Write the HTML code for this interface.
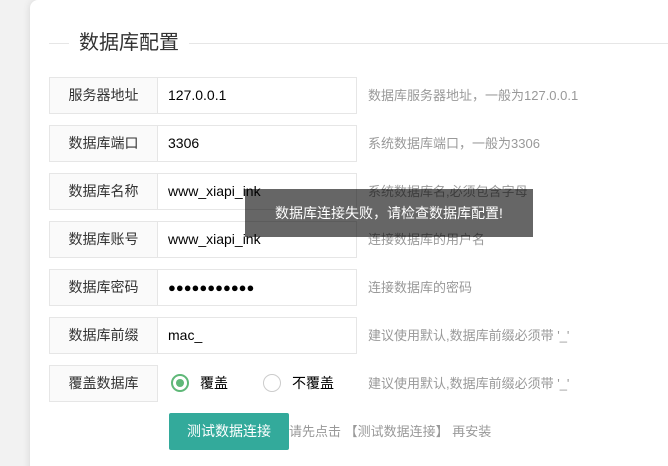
<!DOCTYPE html>
<html><head><meta charset="utf-8"><style>
html,body{margin:0;width:668px;height:466px;overflow:hidden}
body{background:#f2f2f2;font-family:"Liberation Sans","Noto Sans CJK SC",sans-serif;position:relative}
.card{position:absolute;left:30px;top:0;width:660px;height:480px;background:#fff;border-radius:8px;box-shadow:0 0 8px rgba(0,0,0,.12)}
.line{position:absolute;left:49px;top:43px;width:640px;height:1px;background:#e6e6e6}
.title{position:absolute;left:69px;top:30px;padding:0 10px;background:#fff;font-size:20px;color:#333;line-height:26px}
.row{position:absolute;left:49px;height:37px;width:600px}
.lab{position:absolute;left:0;top:0;width:107px;height:35px;border:1px solid #e6e6e6;background:#fafafa;font-size:14px;color:#333;line-height:35px;text-align:center}
.inp{position:absolute;left:109px;top:0;height:35px;border:1px solid #e6e6e6;border-left:none;background:#fff;font-size:14px;color:#000;line-height:35px;padding-left:10px;width:188px}
.hint{position:absolute;left:319px;top:0;line-height:37px;font-size:13px;color:#999;white-space:nowrap}
.radio{position:absolute;top:9px;width:18px;height:18px;border-radius:50%;border:1px solid #ccc;box-sizing:border-box}
.radio.on{border:2px solid #5fb878}
.radio.on:after{content:"";position:absolute;left:3px;top:3px;width:8px;height:8px;border-radius:50%;background:#5fb878}
.rt{position:absolute;top:0;line-height:37px;font-size:14px;color:#000;white-space:nowrap}
.btn{position:absolute;left:169px;top:413px;width:120px;height:37px;background:#33aa9b;border-radius:2px;color:#fff;font-size:14px;line-height:37px;text-align:center}
.tip{position:absolute;left:289px;top:413px;line-height:37px;font-size:13px;color:#999;white-space:nowrap}
.toast{position:absolute;left:245px;top:189px;width:288px;height:48px;background:rgba(0,0,0,.6);color:#fff;font-size:14px;line-height:48px;text-align:center}
</style></head><body>
<div class="card"></div>
<div class="line"></div>
<div class="title">数据库配置</div>
<div class="row" style="top:77px"><div class="lab">服务器地址</div><div class="inp">127.0.0.1</div><div class="hint">数据库服务器地址，一般为127.0.0.1</div></div>
<div class="row" style="top:125px"><div class="lab">数据库端口</div><div class="inp">3306</div><div class="hint">系统数据库端口，一般为3306</div></div>
<div class="row" style="top:173px"><div class="lab">数据库名称</div><div class="inp">www_xiapi_ink</div><div class="hint">系统数据库名,必须包含字母</div></div>
<div class="row" style="top:221px"><div class="lab">数据库账号</div><div class="inp">www_xiapi_ink</div><div class="hint">连接数据库的用户名</div></div>
<div class="row" style="top:269px"><div class="lab">数据库密码</div><div class="inp" style="font-size:13px">●●●●●●●●●●●</div><div class="hint">连接数据库的密码</div></div>
<div class="row" style="top:317px"><div class="lab">数据库前缀</div><div class="inp">mac_</div><div class="hint">建议使用默认,数据库前缀必须带 '_'</div></div>
<div class="row" style="top:365px"><div class="lab">覆盖数据库</div>
<div class="radio on" style="left:122px"></div><div class="rt" style="left:151px">覆盖</div>
<div class="radio" style="left:214px"></div><div class="rt" style="left:243px">不覆盖</div>
<div class="hint">建议使用默认,数据库前缀必须带 '_'</div></div>
<div class="btn">测试数据连接</div>
<div class="tip">请先点击 【测试数据连接】 再安装</div>
<div class="toast">数据库连接失败，请检查数据库配置!</div>
</body></html>
